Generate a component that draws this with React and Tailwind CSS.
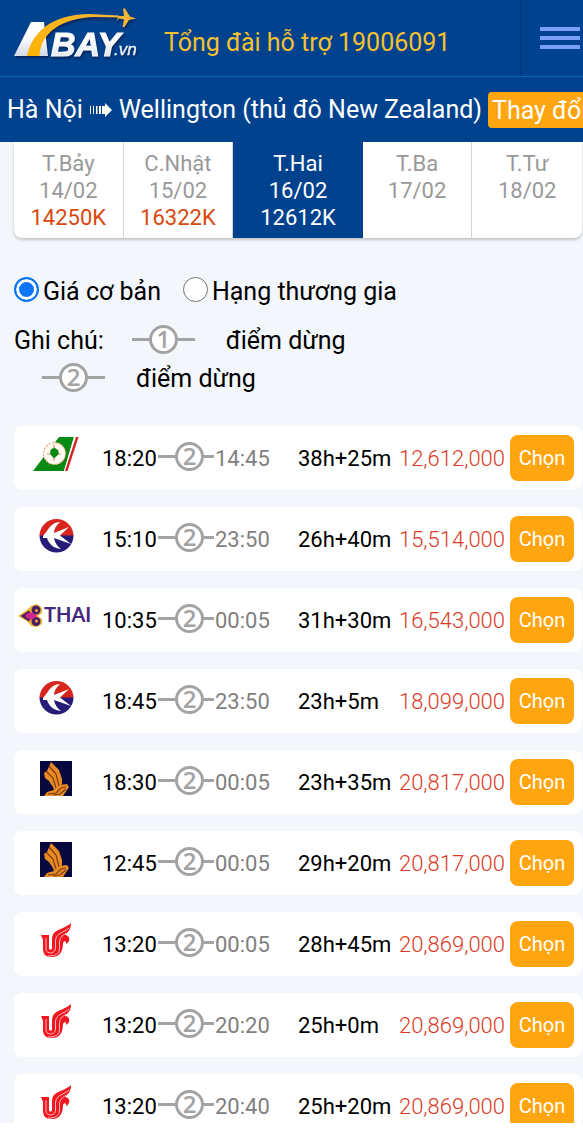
import React, { useState } from 'react';

const days = [
  { name: 'T.Bảy', date: '14/02', price: '14250K' },
  { name: 'C.Nhật', date: '15/02', price: '16322K' },
  { name: 'T.Hai', date: '16/02', price: '12612K' },
  { name: 'T.Ba', date: '17/02' },
  { name: 'T.Tư', date: '18/02' },
];

const flights = [
  { airline: 'eva', depart: '18:20', arrive: '14:45', duration: '38h+25m', price: '12,612,000' },
  { airline: 'eastern', depart: '15:10', arrive: '23:50', duration: '26h+40m', price: '15,514,000' },
  { airline: 'thai', depart: '10:35', arrive: '00:05', duration: '31h+30m', price: '16,543,000' },
  { airline: 'eastern', depart: '18:45', arrive: '23:50', duration: '23h+5m', price: '18,099,000' },
  { airline: 'singapore', depart: '18:30', arrive: '00:05', duration: '23h+35m', price: '20,817,000' },
  { airline: 'singapore', depart: '12:45', arrive: '00:05', duration: '29h+20m', price: '20,817,000' },
  { airline: 'airchina', depart: '13:20', arrive: '00:05', duration: '28h+45m', price: '20,869,000' },
  { airline: 'airchina', depart: '13:20', arrive: '20:20', duration: '25h+0m', price: '20,869,000' },
  { airline: 'airchina', depart: '13:20', arrive: '20:40', duration: '25h+20m', price: '20,869,000' },
];

const AbayLogo = () => (
  <svg
    width="126"
    height="62"
    viewBox="12 6 126 62"
    role="img"
    aria-label="Abay.vn"
    className="drop-shadow-[1px_2px_1px_#07245c]"
  >
    <defs>
      <linearGradient id="silver" x1="0" y1="0" x2="0" y2="1">
        <stop offset="0.4" stopColor="#ffffff" />
        <stop offset="1" stopColor="#d3dbe8" />
      </linearGradient>
      <linearGradient id="gold" x1="0" y1="1" x2="1" y2="0">
        <stop offset="0" stopColor="#ffb400" />
        <stop offset="1" stopColor="#f3b43a" />
      </linearGradient>
    </defs>
    <path d="M14 56 31 22H44L48 56Z" fill="url(#silver)" />
    <path d="M27 56C31 36 48 14 90 14L119 15.500V17.500L95 17C62 18 41 32 39.500 56Z" fill="url(#gold)" />
    <path d="M117 16 124 16 123 8.500 125 8.500 130 16.500 136 18.500 129 20 124.500 27 122.500 27 124 19.500 119 18.500 117 21 118 17Z" fill="#f3b43a" />
    <text x="51" y="56" fontFamily="Liberation Sans, sans-serif" fontSize="34" fontWeight="700" fontStyle="italic" fill="url(#silver)" stroke="#f4f6fa" strokeWidth="1.2">
      BAY
    </text>
    <text x="114" y="55" fontFamily="Liberation Sans, sans-serif" fontSize="17" fontStyle="italic" fill="#e9eef6" stroke="#e9eef6" strokeWidth="0.4">
      .vn
    </text>
  </svg>
);

const logos = {
  eva: (
    <svg width="46" height="35" viewBox="0 0 46 35">
      <path d="M26 0H41L31 34H0Z" fill="#078a14" />
      <path d="M41 0H46L35 34H31Z" fill="#fff" />
      <path d="M43 0H45.500L34.500 34H32Z" fill="#d3231f" />
      <circle cx="21.500" cy="16.500" r="11" fill="#fffaf2" stroke="#e9a27c" strokeWidth="1.200" strokeDasharray="2 1.500" />
      <path d="M21 10.500 25 13 26 17 21 21.500 17 17 17.500 13Z" fill="#078a14" />
      <path d="M21 7V11M28 17H25M21 24V21M14 17H17" stroke="#e58d64" />
    </svg>
  ),
  eastern: (
    <svg width="35" height="35" viewBox="0 0 35 35">
      <path d="M0.500 18A17 17 0 0 1 34.500 18Z" fill="#d8251d" />
      <path d="M0.500 17.500A17 17 0 0 0 34.500 17.500Z" fill="#271b78" />
      <path d="M4 18 8 13C11 8 15 4 21 4 17 8 15 11 15 15L30 9 21 17.500 32 26 15 20C16 25 18 28 22 31 14 30 10 26 8 20L4 20Z" fill="#fff" />
    </svg>
  ),
  thai: (
    <svg width="76" height="28" viewBox="0 -2 76 28">
      <path d="M0 12 10 5 13 2 19 0 24 4 24 9 20 12 24 15 24 20 19 23 13 22 10 18Z" fill="#efb52e" />
      <circle cx="18" cy="6" r="4.500" fill="#4c1b66" />
      <circle cx="18" cy="17.500" r="4.500" fill="#4c1b66" />
      <path d="M2.500 12 11 6.500 15 12 11 17.500Z" fill="#4c1b66" />
      <path d="M7 12C11 7 15 8 19 12 15 16 11 17 7 12Z" fill="#cf278f" />
      <circle cx="18.500" cy="6.500" r="1.500" fill="#efb52e" />
      <circle cx="18.500" cy="17" r="1.500" fill="#efb52e" />
      <text x="26" y="18" fontFamily="Lato, sans-serif" fontSize="20" fontWeight="700" fill="#45257e">THAI</text>
    </svg>
  ),
  singapore: (
    <svg width="32" height="35" viewBox="0 0 32 35">
      <path d="M0 0H32V35H0Z" fill="#08083f" />
      <path d="M11 1 19 9 22 18 22 23 18 29H14L13 26 9 20 5 17 4 12 7 10Z" fill="#e98a24" />
      <path d="M9 5 16 13 19 25M6 10 13 17 16 27" stroke="#7d3b12" strokeWidth="1.200" fill="none" />
      <path d="M4 35 7 31 14 29 20 24 27 23 29 26 23 35Z" fill="#e98a24" />
      <path d="M8 33 16 32 21 27 26 26M13 34 20 33 26 28" stroke="#7d3b12" strokeWidth="1.200" fill="none" />
    </svg>
  ),
  airchina: (
    <svg width="32" height="35" viewBox="0 0 32 35">
      <path
        d="M1 12 9 12V25C9 27 12 27 12 25V16C13 5 22 8 31 0 31 8 27 9 25 12 30 12 31 19 26 21 27 18 24 17 23 20 23 28 20 34 12 34 5 34 3 31 3 25V17Z"
        fill="#f01820"
      />
      <path
        d="M6 15V26C6 31 15 32 15.500 25V17C17 9 24 10 29 5M8 33C16 33 19.500 31 19.500 25V19C20 13 24 12 26 10"
        fill="none"
        stroke="#ffc9c9"
        strokeWidth="0.9"
      />
    </svg>
  ),
};

const Stops = ({ count, tail }) => (
  <span className="flex items-center text-[#a3a3a3]">
    <span className="h-[3px] w-[17px] bg-[#a3a3a3]" />
    <span className="flex size-[29px] items-center justify-center rounded-full border-3 border-[#a3a3a3] bg-white font-['Open_Sans',sans-serif] text-2xl leading-none font-semibold">
      {count}
    </span>
    <span className={`h-[3px] bg-[#a3a3a3] ${tail}`} />
  </span>
);

const FareOption = ({ value, label, fare, setFare }) => (
  <label className="flex items-center gap-1">
    <input
      type="radio"
      name="fare"
      checked={fare === value}
      onChange={() => setFare(value)}
      className="mb-[6px] size-[25px] appearance-none rounded-full border border-[#767676] bg-white checked:border-2 checked:border-[#0b75f5] checked:bg-[#0b75f5] checked:shadow-[inset_0_0_0_3px_white]"
    />
    {label}
  </label>
);

const FlightRow = ({ flight }) => (
  <li className="flex h-16 items-center rounded-lg bg-white pr-2">
    <span className="mb-2 flex w-[84px] shrink-0 justify-center">{logos[flight.airline]}</span>
    <span className="ml-1 w-14">{flight.depart}</span>
    <span className="mb-1">
      <Stops count={2} tail="w-[10px]" />
    </span>
    <span className="ml-px w-[83px] text-[#808080]">{flight.arrive}</span>
    <span className="w-[96px]">{flight.duration}</span>
    <span className="ml-auto font-light text-[#dc3a26]">{flight.price}</span>
    <button className="ml-[5px] h-[46px] w-16 shrink-0 rounded-lg bg-[#ffa510] text-xl text-white">Chọn</button>
  </li>
);

const App = () => {
  const [fare, setFare] = useState('basic');
  const [selected, setSelected] = useState(2);

  return (
    <div className="flex h-screen flex-col overflow-hidden bg-white pb-[9px] font-['Roboto',sans-serif] text-[25px] text-black">
      <header className="shrink-0 bg-[#00428e]">
        <div className="flex h-[77px] border-b border-[#0862ad]">
          <a href="#" className="mt-[6px] ml-3 shrink-0">
            <AbayLogo />
          </a>
          <a href="tel:19006091" className="ml-[26px] self-center pt-[10px] whitespace-nowrap text-[#f5c12e]">
            Tổng đài hỗ trợ 19006091
          </a>
          <button
            aria-label="Menu"
            className="ml-auto flex w-[63px] flex-col items-start justify-center gap-[5px] border-l border-[#0c2f7c] pl-[19px]"
          >
            <span className="h-1 w-10 bg-[#7a9ff8]" />
            <span className="h-1 w-10 bg-[#7a9ff8]" />
            <span className="h-1 w-10 bg-[#7a9ff8]" />
          </button>
        </div>

        <div className="flex h-[65px] items-center overflow-hidden pt-px pl-[7px] whitespace-nowrap text-white">
          Hà Nội
          <svg width="22" height="14" viewBox="0 0 22 14" className="mx-[7px] shrink-0" fill="#fffaf0">
            <path d="M0 3h1v8H0zM3 3h1v8H3zM6 3h1.500v8H6zM9 3h2v8H9zM12 3h3V0l7 7-7 7v-3h-3z" />
          </svg>
          Wellington (thủ đô New Zealand)
          <button className="ml-[6px] h-9 shrink-0 rounded-sm bg-[#ffa510] px-1">Thay đổi</button>
        </div>
      </header>

      <main className="min-h-0 flex-1 overflow-hidden bg-[#f3f6fa] pr-px pl-[14px]">
        <nav className="grid h-24 grid-cols-[11fr_11fr_13fr_11fr_11fr] rounded-b-lg bg-white text-[22px] leading-[27px] shadow-[0_2px_3px_#00000033]">
          {days.map((day, i) => (
            <button
              key={day.date}
              onClick={() => setSelected(i)}
              className={`flex flex-col items-center pt-2 ${
                i === selected ? 'bg-[#00428e] text-white' : 'border-r border-[#d4d4d4] text-[#999999] last:border-0'
              }`}
            >
              <span>{day.name}</span>
              <span>{day.date}</span>
              {day.price && <span className={i === selected ? 'text-white' : 'text-[#d9480f]'}>{day.price}</span>}
            </button>
          ))}
        </nav>

        <div className="mt-[35px] flex gap-[22px] leading-[38px]">
          <FareOption value="basic" label="Giá cơ bản" fare={fare} setFare={setFare} />
          <FareOption value="business" label="Hạng thương gia" fare={fare} setFare={setFare} />
        </div>

        <div className="mt-[11px] leading-[38px]">
          <div className="flex">
            <span className="mr-7">Ghi chú:</span>
            <span className="mb-1 flex">
              <Stops count={1} tail="w-[17px]" />
            </span>
            <span className="ml-[31px]">điểm dừng</span>
          </div>
          <div className="flex pl-7">
            <span className="mb-1 flex">
              <Stops count={2} tail="w-[17px]" />
            </span>
            <span className="ml-[31px]">điểm dừng</span>
          </div>
        </div>

        <ul className="mt-7 flex flex-col gap-[17px] text-[22px]">
          {flights.map((flight, i) => (
            <FlightRow key={i} flight={flight} />
          ))}
        </ul>
      </main>
    </div>
  );
};

export default App;
